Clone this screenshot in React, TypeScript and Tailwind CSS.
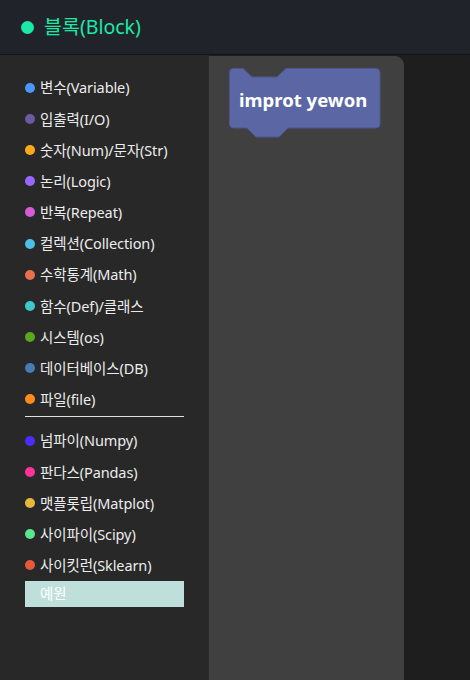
import React from "react";

const items1 = [
  { c: "#4c97ff", t: "변수(Variable)" },
  { c: "#6a5a9f", t: "입출력(I/O)" },
  { c: "#ffab19", t: "숫자(Num)/문자(Str)" },
  { c: "#9966ff", t: "논리(Logic)" },
  { c: "#d65cd6", t: "반복(Repeat)" },
  { c: "#4cbfe6", t: "컬렉션(Collection)" },
  { c: "#e9704f", t: "수학통계(Math)" },
  { c: "#3fc8cc", t: "함수(Def)/클래스" },
  { c: "#5aa61e", t: "시스템(os)" },
  { c: "#4a7ab5", t: "데이터베이스(DB)" },
  { c: "#ff8c1a", t: "파일(file)" },
];
const items2 = [
  { c: "#4a2cff", t: "넘파이(Numpy)" },
  { c: "#ff3399", t: "판다스(Pandas)" },
  { c: "#e6b83c", t: "맷플롯립(Matplot)" },
  { c: "#59e68c", t: "사이파이(Scipy)" },
  { c: "#e6593c", t: "사이킷런(Sklearn)" },
];

const font = { fontFamily: '"Noto Sans", "Noto Sans CJK KR", sans-serif' };

function Row({ c, t }: { c: string; t: string }) {
  return (
    <div className="flex h-[31.2px] items-center gap-[5px]">
      <span className="h-[10px] w-[10px] shrink-0 rounded-full" style={{ backgroundColor: c }} />
      <span className="text-[14.5px] leading-none tracking-[-0.1px] text-[#ececec]">{t}</span>
    </div>
  );
}

export default function App() {
  return (
    <div className="flex h-[680px] w-[470px] flex-col overflow-hidden bg-[#1e1e1e]" style={font}>
      <div className="flex h-[55px] shrink-0 items-center gap-[10px] border-b border-[#121417] bg-[#202329] pl-[21px]">
        <span className="h-[13px] w-[13px] rounded-full bg-[#1de9a6]" />
        <span className="text-[19.5px] leading-none text-[#1de9a6]">블록(Block)</span>
      </div>
      <div className="flex flex-1">
        <div className="flex w-[209px] shrink-0 flex-col bg-[#282828] pl-[25px] pt-[17px]">
          {items1.map((i) => (
            <Row key={i.t} {...i} />
          ))}
          <div className="mb-[8px] mt-[1px] h-px w-[159px] bg-[#e0e0e0]" />
          {items2.map((i) => (
            <Row key={i.t} {...i} />
          ))}
          <div className="flex h-[26px] w-[159px] items-center bg-[#bfe0da] pl-[15px] text-[14.5px] text-white">
            예원
          </div>
        </div>
        <div className="mt-px w-[195px] shrink-0 rounded-tr-[9px] bg-[#404040] pl-[20px] pt-[12px]">
          <div className="relative h-[72px] w-[152px]">
            <svg width="152" height="72" viewBox="0 0 152 72" className="absolute left-0 top-0">
              <path
                d="M0.5,4.5 Q0.5,0.5 4.5,0.5 H14 L23,9 H48 L57,0.5 H147 Q151,0.5 151,4.5 V56 Q151,60 147,60 H59 L50,69 H27 L18,60 H4.5 Q0.5,60 0.5,56 Z"
                fill="#5b67a5"
                stroke="#4b5690"
                strokeWidth="1"
              />
            </svg>
            <span className="absolute left-[10px] top-[23px] text-[18.5px] font-bold leading-none text-white">
              improt yewon
            </span>
          </div>
        </div>
      </div>
    </div>
  );
}
